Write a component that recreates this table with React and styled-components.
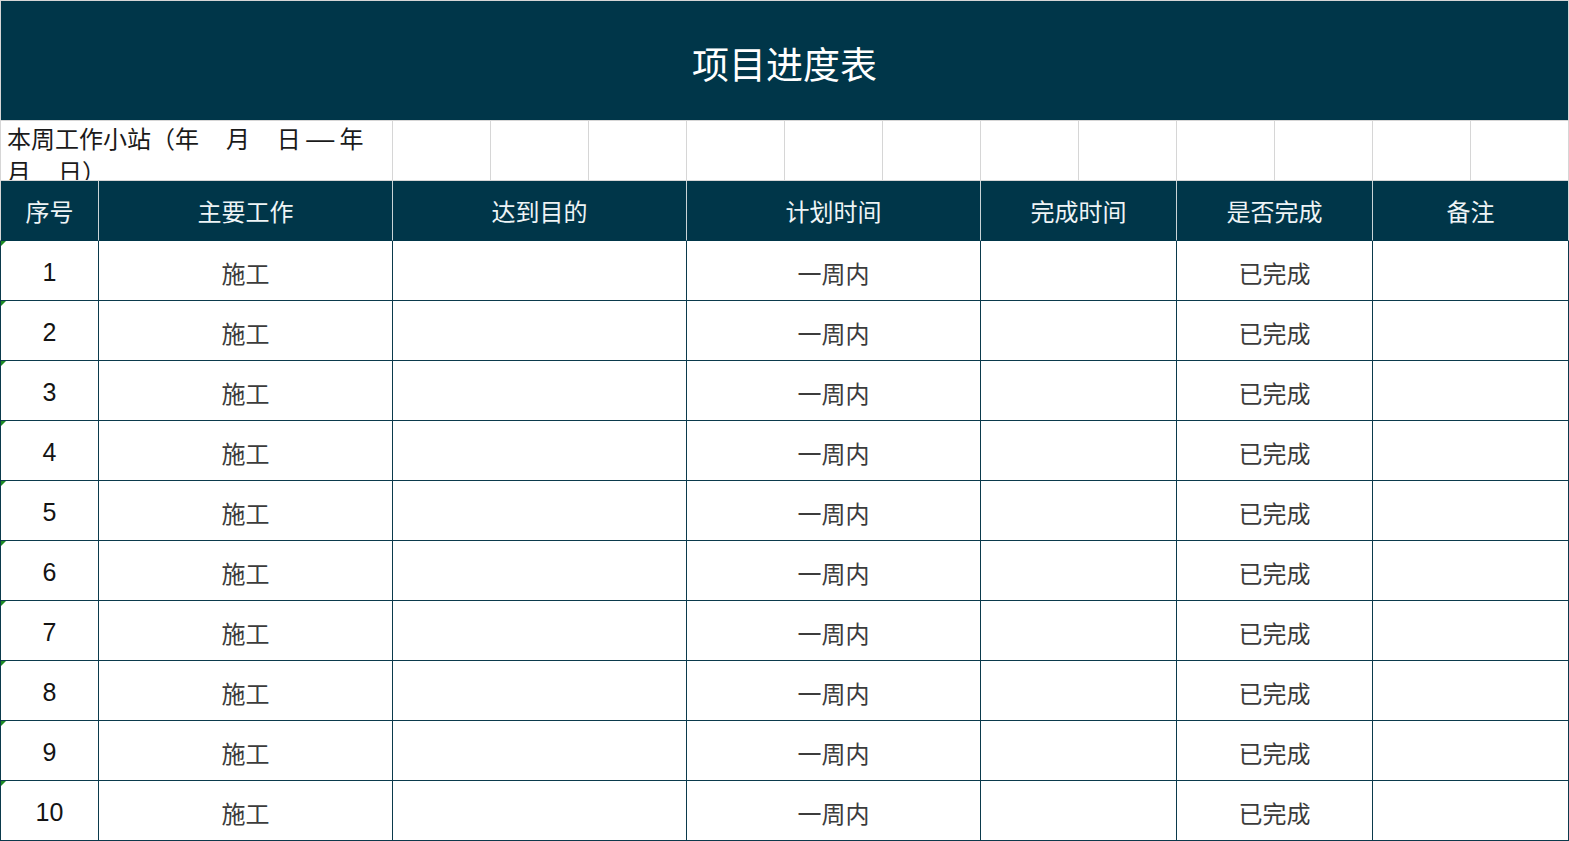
import { Fragment } from "react";
import styled, { createGlobalStyle, css } from "styled-components";

const GlobalStyle = createGlobalStyle`
  body {
    margin: 0;
    background: #ffffff;
    font-family: "Noto Sans CJK SC", "Liberation Sans", sans-serif;
  }
`;

const NAVY = "#003649";
const LINE = "#0b3a4c";
const GRID = "#d6d6d6";

const Sheet = styled.div`
  display: grid;
  grid-template-columns: 99px repeat(15, 98px);
  grid-template-rows: 121px;
  grid-auto-rows: 60px;
  width: 1569px;
`;

const Cell = styled.div`
  box-sizing: border-box;
  grid-column: span ${(p) => p.$span || 1};
  display: flex;
  align-items: center;
  justify-content: center;
  overflow: hidden;
  border-right: 1px solid ${GRID};
  border-bottom: 1px solid ${GRID};
  ${(p) => p.$first && css`border-left: 1px solid ${GRID};`}
`;

const TitleCell = styled(Cell)`
  grid-column: 1 / -1;
  border-top: 1px solid ${GRID};
  background: ${NAVY};
  color: #ffffff;
  font-size: 37px;
  padding-top: 4px;
`;

const NoteCell = styled(Cell)`
  display: block;
  padding: 1px 0 0 6px;
  font-size: 24px;
  line-height: 32px;
  color: #1a1a1a;
  white-space: pre-wrap;
`;

const Dash = styled.span`
  font-family: "Liberation Sans", Arial, sans-serif;
  font-size: 28px;
`;

const HeadCell = styled(Cell)`
  background: ${NAVY};
  color: #eef4f6;
  font-size: 24px;
  border-bottom-color: ${NAVY};
  border-right-color: ${(p) => (p.$last ? GRID : "#c9d3d6")};
`;

const BodyCell = styled(Cell)`
  position: relative;
  border-right-color: ${LINE};
  border-bottom-color: ${LINE};
  ${(p) => p.$first && css`border-left-color: ${LINE};`}
  color: ${(p) => (p.$num ? "#141414" : "#3c3c3c")};
  font-family: ${(p) =>
    p.$num
      ? `"Liberation Sans", Arial, sans-serif`
      : `"Noto Sans CJK SC", sans-serif`};
  font-size: ${(p) => (p.$num ? "25px" : "24px")};
  padding-top: 3px;
`;

const Flag = styled.span`
  position: absolute;
  top: 0;
  left: 0;
  width: 0;
  height: 0;
  border-top: 5px solid #1d8a24;
  border-right: 5px solid transparent;
`;

const headers = [
  { label: "序号", span: 1 },
  { label: "主要工作", span: 3 },
  { label: "达到目的", span: 3 },
  { label: "计划时间", span: 3 },
  { label: "完成时间", span: 2 },
  { label: "是否完成", span: 2 },
  { label: "备注", span: 2 },
];

const rows = Array.from({ length: 10 }, (_, i) => ({
  no: String(i + 1),
  work: "施工",
  goal: "",
  plan: "一周内",
  done: "",
  finished: "已完成",
  note: "",
}));

export default function App() {
  return (
    <>
      <GlobalStyle />
      <Sheet>
        <TitleCell $first>项目进度表</TitleCell>

        <NoteCell $first $span={4}>
          {"本周工作小站（年     月     日 "}
          <Dash>—</Dash>
          {" 年\n月     日）"}
        </NoteCell>
        {Array.from({ length: 12 }, (_, i) => (
          <Cell key={i} />
        ))}

        {headers.map((h, i) => (
          <HeadCell
            key={h.label}
            $span={h.span}
            $first={i === 0}
            $last={i === headers.length - 1}
          >
            {h.label}
          </HeadCell>
        ))}

        {rows.map((r) => (
          <Fragment key={r.no}>
            <BodyCell $first $num>
              <Flag />
              {r.no}
            </BodyCell>
            <BodyCell $span={3}>{r.work}</BodyCell>
            <BodyCell $span={3}>{r.goal}</BodyCell>
            <BodyCell $span={3}>{r.plan}</BodyCell>
            <BodyCell $span={2}>{r.done}</BodyCell>
            <BodyCell $span={2}>{r.finished}</BodyCell>
            <BodyCell $span={2}>{r.note}</BodyCell>
          </Fragment>
        ))}
      </Sheet>
    </>
  );
}
